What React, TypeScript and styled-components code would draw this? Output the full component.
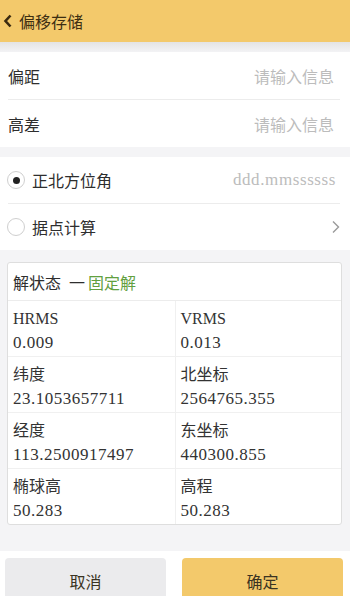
import React from "react";
import styled, { createGlobalStyle } from "styled-components";

const FONT = `"Liberation Serif", "Noto Sans CJK SC", serif`;

const GlobalStyle = createGlobalStyle`
  * { box-sizing: border-box; }
  body {
    margin: 0;
    background: #f4f4f6;
    font-family: ${FONT};
    color: #333;
  }
`;

interface Cell {
  label: string;
  value: string;
}

const cells: Cell[] = [
  { label: "HRMS", value: "0.009" },
  { label: "VRMS", value: "0.013" },
  { label: "纬度", value: "23.1053657711" },
  { label: "北坐标", value: "2564765.355" },
  { label: "经度", value: "113.2500917497" },
  { label: "东坐标", value: "440300.855" },
  { label: "椭球高", value: "50.283" },
  { label: "高程", value: "50.283" },
];

const Page = styled.div`
  width: 350px;
  height: 596px;
  overflow: hidden;
  display: flex;
  flex-direction: column;
`;

const Header = styled.div`
  height: 42px;
  flex-shrink: 0;
  background: #f3c96b;
  display: flex;
  align-items: center;
  padding-left: 3px;
  gap: 6px;
  font-size: 16px;
  color: #3d2e12;
`;

const Shade = styled.div`
  height: 10px;
  flex-shrink: 0;
  background: linear-gradient(#e4e4e4, #f3f3f5);
`;

const Section = styled.div<{ $gap: number }>`
  background: #fff;
  padding: 0 10px 0 8px;
  margin-bottom: ${(p) => p.$gap}px;
`;

const Row = styled.div<{ $h: number; $last?: boolean }>`
  height: ${(p) => p.$h}px;
  display: flex;
  align-items: center;
  justify-content: space-between;
  font-size: 16px;
  color: #2e2e2e;
  border-bottom: ${(p) => (p.$last ? "none" : "1px solid #ececec")};
`;

const Hint = styled.span<{ $latin?: boolean }>`
  color: #bcbcbc;
  font-size: ${(p) => (p.$latin ? 17 : 16)}px;
  letter-spacing: ${(p) => (p.$latin ? "0.6px" : "0")};
  padding-right: ${(p) => (p.$latin ? 4 : 6)}px;
`;

const RadioWrap = styled.label`
  display: flex;
  align-items: center;
  gap: 7px;
  margin-left: -1px;
`;

const Radio = styled.span<{ $on?: boolean }>`
  width: 18px;
  height: 18px;
  border-radius: 50%;
  border: 1px solid #cfcfcf;
  background: #fff;
  display: flex;
  align-items: center;
  justify-content: center;
  &::after {
    content: "";
    display: ${(p) => (p.$on ? "block" : "none")};
    width: 7px;
    height: 7px;
    border-radius: 50%;
    background: #222;
  }
`;

const Card = styled.div`
  margin: 0 8px 26px 7px;
  background: #fff;
  border: 1px solid #dedede;
  border-radius: 3px;
`;

const CardTitle = styled.div`
  height: 38px;
  display: flex;
  align-items: center;
  padding-left: 5px;
  font-size: 16px;
  color: #2e2e2e;
  border-bottom: 1px solid #ececec;
`;

const Dash = styled.span`
  margin: 0 3px 0 8px;
`;

const Green = styled.span`
  color: #62a040;
`;

const Grid = styled.div`
  display: grid;
  grid-template-columns: 1fr 1fr;
`;

const GridCell = styled.div<{ $right: boolean; $last: boolean }>`
  height: ${(p) => (p.$last ? 55 : 56)}px;
  padding: 6px 0 0 5px;
  border-left: ${(p) => (p.$right ? "1px solid #f0f0f0" : "none")};
  border-bottom: ${(p) => (p.$last ? "none" : "1px solid #f0f0f0")};
  line-height: 24px;
  color: #333;
`;

const CellLabel = styled.div`
  font-size: 16px;
`;

const CellValue = styled.div`
  font-size: 17px;
  letter-spacing: 0.5px;
`;

const Bottom = styled.div`
  flex: 1;
  background: #fff;
  display: flex;
  gap: 16px;
  padding: 7px 7px 0 5px;
`;

const Button = styled.button<{ $primary?: boolean }>`
  flex: 1;
  height: 46px;
  border: none;
  border-radius: 4px;
  background: ${(p) => (p.$primary ? "#f3c96b" : "#ebebed")};
  font-family: ${FONT};
  font-size: 16px;
  color: #3a3322;
`;

const Back = () => (
  <svg width="10" height="14" viewBox="0 0 10 14">
    <path d="M7.5 1.5 L2.5 7 L7.5 12.5" fill="none" stroke="#3a2a10" strokeWidth="2.6" />
  </svg>
);

const Chevron = () => (
  <svg width="8" height="14" viewBox="0 0 8 14">
    <path d="M1 1.5 L6.5 7 L1 12.5" fill="none" stroke="#9a9a9a" strokeWidth="1.4" />
  </svg>
);

export default function App() {
  return (
    <Page>
      <GlobalStyle />
      <Header>
        <Back />
        <span>偏移存储</span>
      </Header>
      <Shade />
      <Section $gap={10}>
        <Row $h={48}>
          <span>偏距</span>
          <Hint>请输入信息</Hint>
        </Row>
        <Row $h={47} $last>
          <span>高差</span>
          <Hint>请输入信息</Hint>
        </Row>
      </Section>
      <Section $gap={12}>
        <Row $h={47}>
          <RadioWrap>
            <Radio $on />
            正北方位角
          </RadioWrap>
          <Hint $latin>ddd.mmssssss</Hint>
        </Row>
        <Row $h={46} $last>
          <RadioWrap>
            <Radio />
            据点计算
          </RadioWrap>
          <Chevron />
        </Row>
      </Section>
      <Card>
        <CardTitle>
          解状态<Dash>一</Dash>
          <Green>固定解</Green>
        </CardTitle>
        <Grid>
          {cells.map((c, i) => (
            <GridCell key={c.label} $right={i % 2 === 1} $last={i >= cells.length - 2}>
              <CellLabel>{c.label}</CellLabel>
              <CellValue>{c.value}</CellValue>
            </GridCell>
          ))}
        </Grid>
      </Card>
      <Bottom>
        <Button>取消</Button>
        <Button $primary>确定</Button>
      </Bottom>
    </Page>
  );
}
